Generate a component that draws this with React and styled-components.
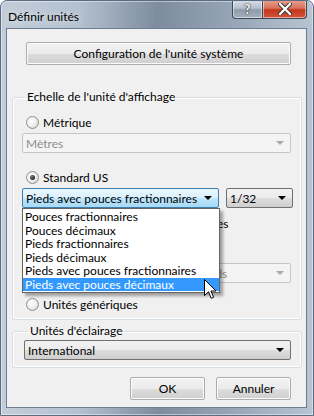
import React from "react"
import styled, { createGlobalStyle, css } from "styled-components"

const Global = createGlobalStyle`
  html, body { margin: 0; padding: 0; background: #fff; }
  body { font-family: Lato, "Open Sans", sans-serif; font-size: 12px; color: #000; }
  * { box-sizing: border-box; }
`

const Window = styled.div`
  position: relative;
  width: 314px;
  height: 416px;
  border-radius: 7px 7px 0 0;
  border: 1px solid #5a6c84;
  background: linear-gradient(90deg, #c2cdd9 0%, #b4c1cf 25%, #7d8d9f 50%, #93a3b5 72%, #b8c4d1 100%);
  box-shadow: inset 0 0 0 1px rgba(255, 255, 255, 0.45);
  display: flex;
  flex-direction: column;
  overflow: hidden;
`

const TitleBar = styled.div`
  height: 27px;
  display: flex;
  align-items: flex-start;
  padding-left: 7px;
`

const Title = styled.div`
  margin-top: 8px;
  font-size: 12px;
  color: #000;
  text-shadow: 0 0 6px rgba(255, 255, 255, 0.9);
  flex: 1;
`

const Caption = styled.div`
  height: 19px;
  margin-top: -1px;
  border: 1px solid #3c4858;
  border-top: none;
  display: flex;
  align-items: center;
  justify-content: center;
  color: #fff;
  font-weight: bold;
  font-size: 13px;
  ${p => p.$close ? css`
    width: 44px;
    margin-right: 6px;
    border-left: none;
    border-radius: 0 0 4px 0;
    background: linear-gradient(180deg, #e9a291 0%, #d9725b 45%, #c3361a 55%, #d3543a 100%);
  ` : css`
    width: 31px;
    border-radius: 0 0 0 4px;
    background: linear-gradient(180deg, #d9e0e8 0%, #b6c1cd 45%, #8e9bab 55%, #a3b0bf 100%);
  `}
  box-shadow: inset 0 0 0 1px rgba(255, 255, 255, 0.5);
  text-shadow: 0 0 2px #333, 0 0 1px #000;
`

const Client = styled.div`
  margin: 0 6px 7px 5px;
  flex: 1;
  border: 1px solid #6d7c90;
  background: #f0f0f0;
  display: flex;
  flex-direction: column;
  position: relative;
`

const Button = styled.div`
  height: 23px;
  border: 1px solid #acacac;
  border-radius: 2px;
  background: linear-gradient(180deg, #f2f2f2 0%, #ebebeb 50%, #dddddd 51%, #cfcfcf 100%);
  box-shadow: inset 0 0 0 1px #fcfcfc;
  display: flex;
  align-items: center;
  justify-content: center;
  ${p => p.$wide && css`margin: 13px 15px 0 19px;`}
  ${p => p.$w && css`width: ${p.$w}px;`}
`

const Group = styled.fieldset`
  margin: ${p => p.$top}px 4px 0 5px;
  padding: 0 ${p => p.$pr || 9}px ${p => p.$pb}px ${p => p.$pl || 8}px;
  border: 1px solid #d5dfe5;
  border-radius: 3px;
  box-shadow: inset 0 0 0 1px #fff;
  min-width: 0;
  display: flex;
  flex-direction: column;
`

const Legend = styled.legend`
  padding: 0 2px;
  margin-left: 4px;
  line-height: 16px;
  color: #000;
`

const RadioRow = styled.label`
  display: flex;
  align-items: center;
  gap: 4px;
  height: 16px;
  margin-top: ${p => p.$mt}px;
  margin-left: ${p => p.$ml || 5}px;
`

const Radio = styled.span`
  width: 13px;
  height: 13px;
  border-radius: 50%;
  border: 1px solid #8f8f8f;
  background: radial-gradient(circle at 40% 40%, #ffffff 0%, #f0f0f0 45%, #c9c9c9 100%);
  display: flex;
  align-items: center;
  justify-content: center;
  flex: none;
  &::after {
    content: "";
    width: 5px;
    height: 5px;
    border-radius: 50%;
    background: ${p => p.$on ? "radial-gradient(circle at 35% 35%, #7a7a7a, #0a0a0a)" : "transparent"};
  }
`

const Select = styled.div`
  height: 20px;
  border-radius: 2px;
  display: flex;
  align-items: center;
  padding: 0 6px 0 3px;
  flex: ${p => p.$w ? "none" : "1"};
  ${p => p.$w && css`width: ${p.$w}px;`}
  ${p => p.$variant === "disabled" ? css`
    border: 1px solid #c5c5c5;
    background: #f4f4f4;
    color: #8d8d8d;
  ` : p.$variant === "hot" ? css`
    border: 1px solid #3c7fb1;
    background: linear-gradient(180deg, #eaf6fd 0%, #d9f0fc 50%, #bee6fd 51%, #a7d9f5 100%);
  ` : css`
    border: 1px solid #707070;
    background: linear-gradient(180deg, #f2f2f2 0%, #ebebeb 50%, #dddddd 51%, #cfcfcf 100%);
  `}
`

const SelectText = styled.span`
  flex: 1;
  white-space: nowrap;
  overflow: hidden;
`

const Arrow = styled.span`
  width: 0;
  height: 0;
  border-left: 4px solid transparent;
  border-right: 4px solid transparent;
  border-top: 4px solid ${p => p.$dim ? "#a8a8a8" : "#000"};
`

const SelectRow = styled.div`
  display: flex;
  gap: 7px;
  margin: ${p => p.$mt}px ${p => p.$mr ?? 1}px 0 ${p => p.$ml ?? 1}px;
  position: relative;
`

const List = styled.div`
  position: absolute;
  left: 0;
  top: 20px;
  width: 198px;
  border: 1px solid #646464;
  background: #fff;
  padding: 1px 0;
  box-shadow: 3px 3px 3px rgba(0, 0, 0, 0.35);
  z-index: 2;
`

const Item = styled.div`
  height: 13.5px;
  line-height: 13.5px;
  padding-left: 2px;
  white-space: nowrap;
  ${p => p.$sel && css`background: #3399ff; color: #fff;`}
`

const Footer = styled.div`
  display: flex;
  justify-content: flex-end;
  gap: 11px;
  margin: 9px 15px 0 0;
`

const Cursor = styled.svg`
  position: absolute;
  left: 197px;
  top: 250px;
  z-index: 3;
`

const dropdownItems = [
  "Pouces fractionnaires",
  "Pouces décimaux",
  "Pieds fractionnaires",
  "Pieds décimaux",
  "Pieds avec pouces fractionnaires",
  "Pieds avec pouces décimaux",
]

export default function App() {
  return (
    <>
      <Global />
      <Window>
        <TitleBar>
          <Title>Définir unités</Title>
          <Caption>?</Caption>
          <Caption $close>
            <svg width="14" height="12" viewBox="0 0 14 12">
              <path d="M2 1 L12 11 M12 1 L2 11" stroke="#333" strokeWidth="4.2" strokeLinecap="round" />
              <path d="M2 1 L12 11 M12 1 L2 11" stroke="#fff" strokeWidth="2.4" strokeLinecap="round" />
            </svg>
          </Caption>
        </TitleBar>
        <Client>
          <Button $wide>Configuration de l'unité système</Button>

          <Group $top={24} $pb={7}>
            <Legend>Echelle de l'unité d'affichage</Legend>
            <RadioRow $mt={9}><Radio />Métrique</RadioRow>
            <SelectRow $mt={3}>
              <Select $variant="disabled"><SelectText>Mètres</SelectText><Arrow $dim /></Select>
            </SelectRow>
            <RadioRow $mt={16}><Radio $on />Standard US</RadioRow>
            <SelectRow $mt={3}>
              <Select $variant="hot" $w={197}>
                <SelectText>Pieds avec pouces fractionnaires</SelectText><Arrow />
              </Select>
              <Select $w={67}><SelectText>1/32</SelectText><Arrow /></Select>
              <List>
                {dropdownItems.map((t, i) => (
                  <Item key={t} $sel={i === dropdownItems.length - 1}>{t}</Item>
                ))}
              </List>
            </SelectRow>
            <RadioRow $mt={7} $ml={153}><Radio $on />Pouces</RadioRow>
            <SelectRow $mt={32} $ml={174}>
              <Select $variant="disabled"><SelectText>Pieds</SelectText><Arrow $dim /></Select>
            </SelectRow>
            <RadioRow $mt={13}><Radio />Unités génériques</RadioRow>
          </Group>

          <Group $top={3} $pb={7} $pl={11} $pr={10}>
            <Legend>Unités d'éclairage</Legend>
            <SelectRow $mt={1} $ml={0} $mr={0}>
              <Select><SelectText>International</SelectText><Arrow /></Select>
            </SelectRow>
          </Group>

          <Footer>
            <Button $w={75}>OK</Button>
            <Button $w={75}>Annuler</Button>
          </Footer>

          <Cursor width="13" height="21" viewBox="0 0 13 21">
            <path d="M0.5 0.5 L0.5 16.5 L4.5 12.8 L7.2 19.3 L9.6 18.3 L7 12 L12 12 Z" fill="#fff" stroke="#000" strokeWidth="1" strokeLinejoin="round" />
          </Cursor>
        </Client>
      </Window>
    </>
  )
}
